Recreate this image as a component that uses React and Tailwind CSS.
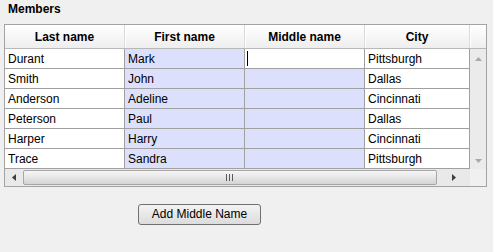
import React from 'react'

const rows = [
  { last: 'Durant', first: 'Mark', middle: '', city: 'Pittsburgh' },
  { last: 'Smith', first: 'John', middle: '', city: 'Dallas' },
  { last: 'Anderson', first: 'Adeline', middle: '', city: 'Cincinnati' },
  { last: 'Peterson', first: 'Paul', middle: '', city: 'Dallas' },
  { last: 'Harper', first: 'Harry', middle: '', city: 'Cincinnati' },
  { last: 'Trace', first: 'Sandra', middle: '', city: 'Pittsburgh' }
]

const headers = [
  { label: 'Last name', w: 'w-[120px]' },
  { label: 'First name', w: 'w-[120px]' },
  { label: 'Middle name', w: 'w-[120px]' },
  { label: 'City', w: 'w-[105px]' }
]

function Arrow({ dir, color }) {
  const pts = {
    up: '0,4 3.5,0 7,4',
    down: '0,0 3.5,4 7,0',
    left: '4,0 0,3.5 4,7',
    right: '0,0 4,3.5 0,7'
  }
  const vertical = dir === 'up' || dir === 'down'
  return (
    <svg width={vertical ? 7 : 4} height={vertical ? 4 : 7} className="block">
      <polygon points={pts[dir]} fill={color} />
    </svg>
  )
}

function App() {
  return (
    <div
      className="w-[493px] h-[252px] bg-[#f0f0f0] text-black overflow-hidden"
      style={{ fontFamily: '"Liberation Sans", Arial, sans-serif' }}
    >
      <div className="h-[24px] pl-[8px] pt-[2px] text-[12px] leading-[14px] font-bold">Members</div>

      <div className="ml-[4px] w-[483px] border border-[#a3a3a3] bg-white">
        {/* header */}
        <div className="flex h-[24px] border-b border-[#b8b8b8] bg-gradient-to-b from-[#ffffff] to-[#eeeeee]">
          {headers.map((h) => (
            <div
              key={h.label}
              className={`${h.w} flex items-center justify-center border-r border-[#dadada] shadow-[1px_0_0_#ffffff] text-[12px] font-bold`}
            >
              {h.label}
            </div>
          ))}
          <div className="flex-1" />
        </div>

        <div className="flex">
          <div className="w-[465px]">
            {rows.map((r, i) => (
              <div key={r.last} className="flex h-[20px] border-b border-[#a0a0a0] text-[12px] leading-[20px]">
                <div className="w-[120px] border-r border-[#a0a0a0] pl-[3px]">{r.last}</div>
                <div className="w-[120px] border-r border-[#a0a0a0] pl-[3px] bg-[#dde0fc]">{r.first}</div>
                <div className={`w-[120px] border-r border-[#a0a0a0] pl-[2px] flex items-center ${i === 0 ? 'bg-white' : 'bg-[#dde0fc]'}`}>
                  {i === 0 && <div className="w-[1px] h-[15px] bg-black" />}
                  {r.middle}
                </div>
                <div className="w-[105px] border-r border-[#a0a0a0] pl-[3px]">{r.city}</div>
              </div>
            ))}
          </div>
          {/* vertical scrollbar */}
          <div className="w-[16px] bg-[#ebebeb] flex flex-col items-center justify-between pt-[8px] pb-[6px]">
            <Arrow dir="up" color="#a8a8a8" />
            <Arrow dir="down" color="#a8a8a8" />
          </div>
        </div>

        {/* horizontal scrollbar */}
        <div className="flex h-[17px]">
          <div className="w-[465px] flex items-center bg-[#e9e9e9]">
            <div className="w-[18px] flex justify-center">
              <Arrow dir="left" color="#404040" />
            </div>
            <div className="w-[414px] h-[15px] rounded-[2px] border border-[#a6a6a6] bg-gradient-to-b from-[#f6f6f6] via-[#e6e6e6] to-[#d4d4d4] flex items-center justify-center">
              <div className="flex gap-[2px] ml-[-2px]">
                <div className="w-[1px] h-[7px] bg-[#5a5a5a]" />
                <div className="w-[1px] h-[7px] bg-[#5a5a5a]" />
                <div className="w-[1px] h-[7px] bg-[#5a5a5a]" />
              </div>
            </div>
            <div className="flex-1 flex justify-center">
              <Arrow dir="right" color="#404040" />
            </div>
          </div>
          <div className="flex-1 bg-[#f0f0f0]" />
        </div>
      </div>

      <div className="flex mt-[17px] pl-[138px]">
        <button className="block w-[123px] h-[21px] rounded-[3px] border border-[#707070] bg-gradient-to-b from-[#f3f3f3] to-[#dcdcdc] text-[12px] leading-[19px] text-black">
          Add Middle Name
        </button>
      </div>
    </div>
  )
}

export default App
